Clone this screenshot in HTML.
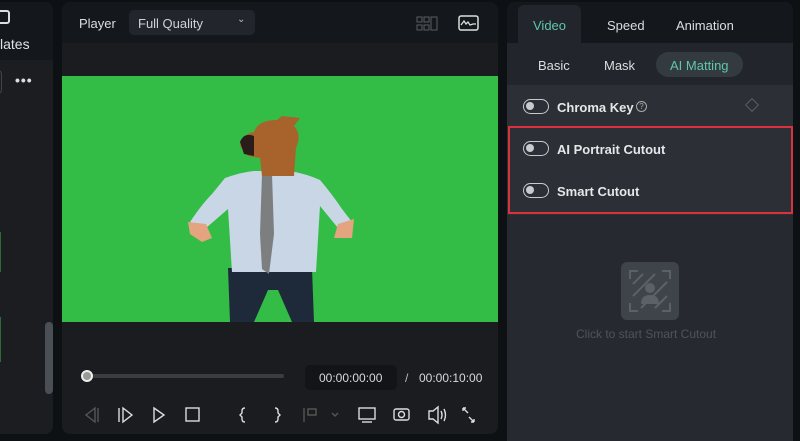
<!DOCTYPE html>
<html><head><style>
*{margin:0;padding:0;box-sizing:border-box}
body{width:800px;height:441px;background:#0e1114;position:relative;overflow:hidden;font-family:"Liberation Sans",sans-serif;color:#d8dadd}
.a{position:absolute}
.tg{position:absolute;width:26px;height:15px;border:1.5px solid #c8cacd;border-radius:8px}
.tg i{position:absolute;left:2px;top:2px;width:8px;height:8px;background:#c8cacd;border-radius:50%}
</style></head><body>
<!-- left panel -->
<div class="a" style="left:0;top:2px;width:53px;height:432px;background:#1b1d21;border-radius:0 8px 8px 0;overflow:hidden">
 <div class="a" style="left:0;top:0;width:53px;height:58px;background:#14181d"></div>
 <div class="a" style="left:-4px;top:8px;width:14px;height:14px;border:2px solid #ddd;border-radius:3px"></div>
 <div class="a" style="left:0;top:34px;font-size:14px;color:#e0e2e4">lates</div>
 <div class="a" style="left:-8px;top:68px;width:10px;height:24px;border:1px solid #444;border-radius:4px"></div>
 <div class="a" style="left:15px;top:70px;font-size:14px;letter-spacing:1px;color:#ddd;font-weight:bold">•••</div>
 <div class="a" style="left:0;top:230px;width:1px;height:40px;background:#2e6a35"></div>
 <div class="a" style="left:0;top:315px;width:1px;height:45px;background:#2e6a35"></div>
 <div class="a" style="left:45px;top:320px;width:8px;height:72px;background:#4a4f55;border-radius:4px"></div>
</div>
<!-- middle panel -->
<div class="a" style="left:62px;top:2px;width:436px;height:432px;background:#1b1c1f;border-radius:8px;overflow:hidden">
 <div class="a" style="left:0;top:0;width:436px;height:41px;background:#14181d"></div>
 <div class="a" style="left:17px;top:14px;font-size:13px;color:#dcdde0">Player</div>
 <div class="a" style="left:67px;top:8px;width:126px;height:25px;background:#22262c;border-radius:5px"></div>
 <div class="a" style="left:76px;top:14px;font-size:13px;color:#cfd2d6">Full Quality</div>
 <div class="a" style="left:175px;top:12px;font-size:10px;color:#bbb">⌄</div>
 <svg class="a" style="left:354px;top:14px" width="24" height="16"><g fill="none" stroke="#5a5e63" stroke-width="1"><rect x="1" y="1" width="5" height="5"/><rect x="8" y="1" width="5" height="5"/><rect x="1" y="9" width="5" height="5"/><rect x="8" y="9" width="5" height="5"/><rect x="15" y="1" width="6" height="13"/></g></svg>
 <svg class="a" style="left:396px;top:13px" width="22" height="17"><rect x="1" y="1" width="19" height="14" rx="2" fill="none" stroke="#ddd" stroke-width="1.5"/><path d="M3 10 L6 6 L8 9 L10 7 L12 10 L15 9 L18 9" fill="none" stroke="#ddd" stroke-width="1.3"/></svg>
 <div class="a" style="left:0;top:74px;width:436px;height:246px;background:#33bd46"></div>
 <svg class="a" style="left:120px;top:112px" width="180" height="210">
  <path d="M46 154 L130 154 L132 208 L110 208 L96 176 L86 176 L72 208 L48 208Z" fill="#1e2a3a"/>
  <path d="M43 64 Q60 58 72 57 L108 57 Q125 60 138 66 Q150 80 160 95 L170 108 L156 114 L138 92 L134 158 L50 158 L46 95 L24 114 L8 108 Q20 90 30 80Z" fill="#c9d6e6"/>
  <path d="M80 60 L90 60 L92 120 L87 160 L80 155 L78 120Z" fill="#7d7e80"/>
  <path d="M6 108 L24 110 L30 124 L20 128 L8 120Z M156 110 L172 105 L170 124 L152 124Z" fill="#e3a47f"/>
  <path d="M72 18 Q76 6 95 6 L100 2 L118 4 L112 12 Q120 20 114 34 L112 62 L80 62 L78 44 L66 42 L58 32 Q60 20 72 18Z" fill="#a8632d"/>
  <path d="M58 28 Q62 18 72 22 L72 42 L62 40Z" fill="#2a1c18"/>
 </svg>
 <div class="a" style="left:26px;top:372px;width:196px;height:4px;background:#3a3c40;border-radius:2px"></div>
 <div class="a" style="left:19px;top:368px;width:12px;height:12px;background:#999;border:2px solid #eee;border-radius:50%"></div>
 <div class="a" style="left:243px;top:363px;width:92px;height:25px;background:#121417;border-radius:5px"></div>
 <div class="a" style="left:257px;top:369px;font-size:12px;color:#d6d8db">00:00:00:00</div>
 <div class="a" style="left:343px;top:369px;font-size:12px;color:#bbb">/</div>
 <div class="a" style="left:357px;top:369px;font-size:12px;color:#d6d8db">00:00:10:00</div>
 <svg class="a" style="left:0;top:396px" width="436" height="30"><g fill="none" stroke-width="1.4">
  <path d="M33 10 L24 17 L33 24Z M36 10 V24" stroke="#555"/>
  <path d="M57 10 V24 M61 10 L70 17 L61 24Z" stroke="#ddd"/>
  <path d="M92 10 L102 17 L92 24Z" stroke="#ddd"/>
  <rect x="124" y="10" width="13" height="13" stroke="#ddd"/>
  <path d="M183 10 Q180 10 180 13 L180 15 L178 17 L180 19 L180 21 Q180 24 183 24" stroke="#ddd"/>
  <path d="M213 10 Q216 10 216 13 L216 15 L218 17 L216 19 L216 21 Q216 24 213 24" stroke="#ddd"/>
  <path d="M242 10 V24 M246 11 H254 V17 H246Z" stroke="#555"/>
  <path d="M270 15 L273 18 L276 15" stroke="#555"/>
  <rect x="297" y="10" width="16" height="11" stroke="#ddd"/><path d="M300 24 H310" stroke="#ddd"/>
  <rect x="332" y="11" width="15" height="11" rx="2" stroke="#ddd"/><circle cx="339.5" cy="16.5" r="3" stroke="#ddd"/>
  <path d="M367 13 H371 L376 9 V25 L371 21 H367Z M379 13 Q381 17 379 21 M382 11 Q385 17 382 23" stroke="#ddd"/>
  <path d="M401 10 L406 15 M401 10 V13 M401 10 H404 M412 24 L407 19 M412 24 V21 M412 24 H409" stroke="#ddd"/>
 </g></svg>
</div>
<!-- right panel -->
<div class="a" style="left:507px;top:2px;width:286px;height:439px;background:#22262c;border-radius:8px 8px 0 0;overflow:hidden">
 <div class="a" style="left:0;top:0;width:286px;height:41px;background:#14181d"></div>
 <div class="a" style="left:11px;top:3px;width:63px;height:41px;background:#22262c;border-radius:6px 6px 0 0"></div>
 <div class="a" style="left:26px;top:16px;font-size:13px;color:#5ec7aa">Video</div>
 <div class="a" style="left:100px;top:16px;font-size:13px;color:#dcdde0">Speed</div>
 <div class="a" style="left:169px;top:16px;font-size:13px;color:#dcdde0">Animation</div>
 <div class="a" style="left:31px;top:56px;font-size:13px;color:#dcdde0">Basic</div>
 <div class="a" style="left:97px;top:56px;font-size:13px;color:#dcdde0">Mask</div>
 <div class="a" style="left:149px;top:50px;width:87px;height:25px;background:#343b40;border-radius:13px"></div>
 <div class="a" style="left:163px;top:56px;font-size:13px;color:#5ec7aa">AI Matting</div>
 <div class="a" style="left:0;top:83px;width:286px;height:356px;background:#262a30"></div>
 <div class="a" style="left:0;top:83px;width:286px;height:130px;background:#2c3036"></div>
 <div class="a" style="left:1px;top:124px;width:285px;height:88px;border:2px solid #d9323c"></div>
 <div class="tg" style="left:16px;top:97px"><i></i></div>
 <div class="a" style="left:50px;top:98px;font-size:13px;font-weight:bold;color:#e6e7e9">Chroma Key</div>
 <div class="a" style="left:129px;top:99px;width:11px;height:11px;border:1px solid #aaa;border-radius:50%;font-size:8px;text-align:center;line-height:9px;color:#aaa">?</div>
 <div class="a" style="left:240px;top:98px;width:10px;height:10px;border:1px solid #5a5e63;transform:rotate(45deg)"></div>
 <div class="tg" style="left:16px;top:139px"><i></i></div>
 <div class="a" style="left:50px;top:140px;font-size:13px;font-weight:bold;color:#e6e7e9">AI Portrait Cutout</div>
 <div class="tg" style="left:16px;top:181px"><i></i></div>
 <div class="a" style="left:50px;top:182px;font-size:13px;font-weight:bold;color:#e6e7e9">Smart Cutout</div>
 <svg class="a" style="left:114px;top:260px" width="58" height="58"><rect width="58" height="58" rx="6" fill="#3f444b"/><g fill="none" stroke="#5c6168" stroke-width="2"><path d="M9 17 V9 H17 M41 9 H49 V17 M49 41 V49 H41 M17 49 H9 V41"/><path d="M12 22 L22 12 M12 34 L34 12 M20 46 L46 20 M34 46 L46 34"/></g><circle cx="29" cy="26" r="5" fill="#5c6168"/><path d="M20 42 Q20 33 29 33 Q38 33 38 42Z" fill="#5c6168"/></svg>
 <div class="a" style="left:69px;top:325px;font-size:12px;color:#4f545a">Click to start Smart Cutout</div>
</div>
</body></html>
